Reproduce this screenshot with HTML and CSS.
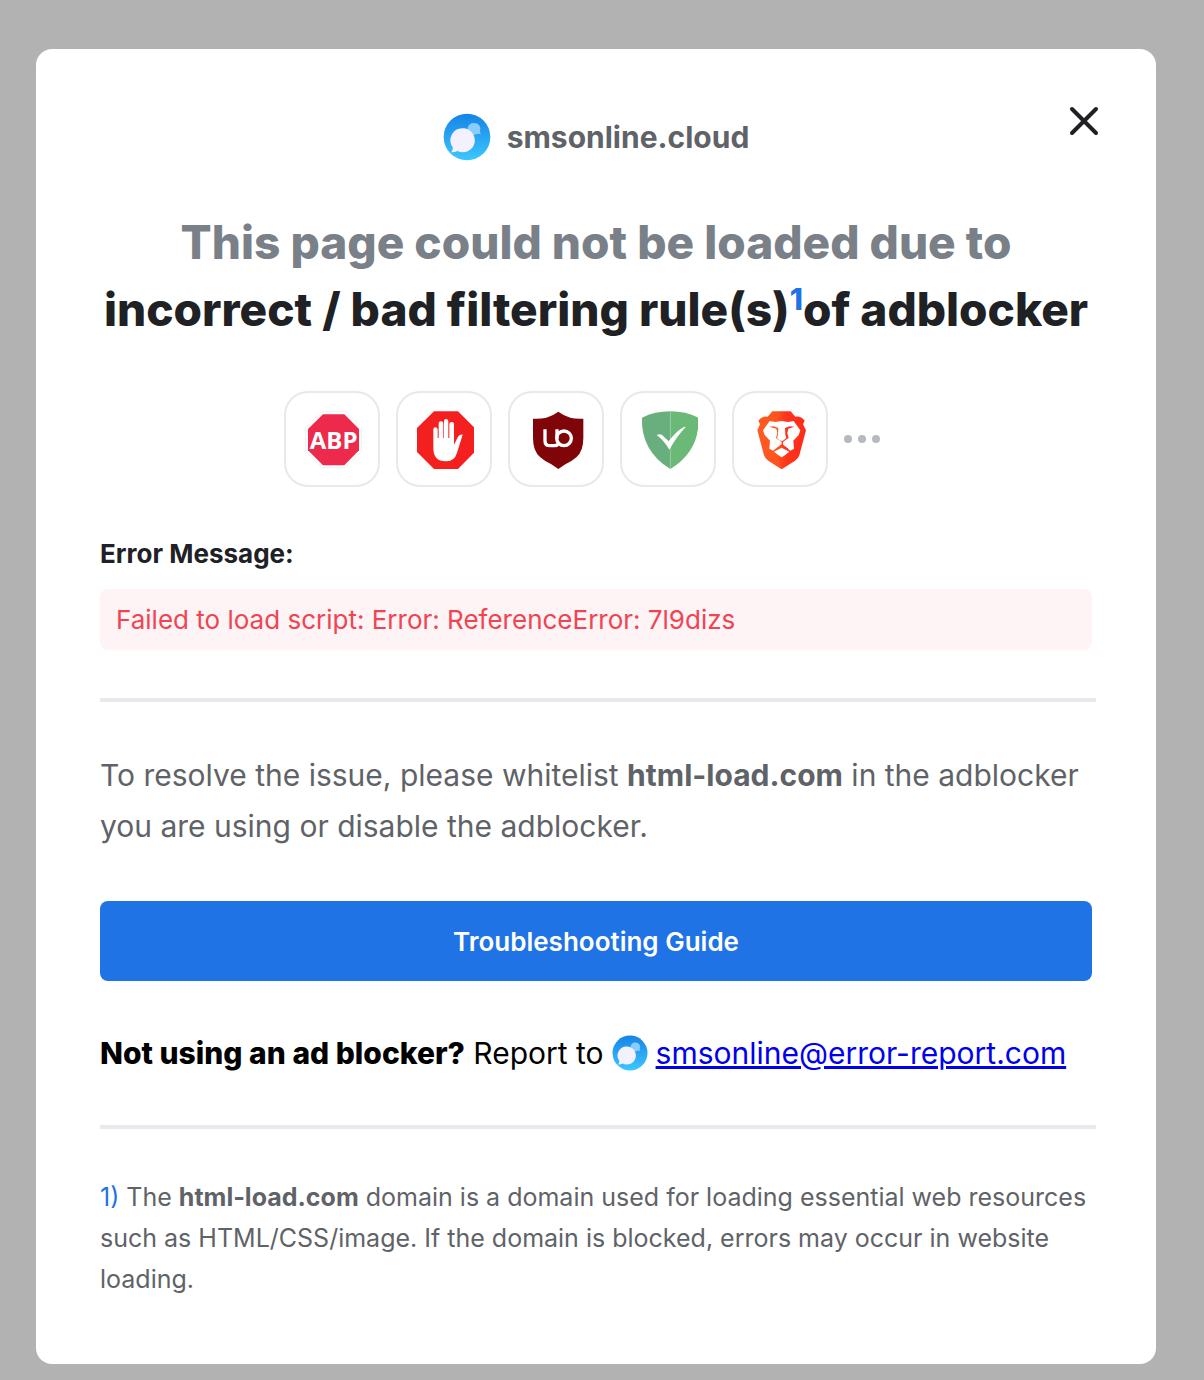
FILE: index.html
```
<!DOCTYPE html>
<html lang="en">
<head>
    <meta charset="UTF-8">
    <meta name="viewport" content="width=device-width, initial-scale=1.0">
    <title>smsonline.cloud</title>
    <link rel="stylesheet" href="styles.css">
</head>
<body>
    <svg width="0" height="0" class="defs" aria-hidden="true">
        <defs>
            <linearGradient id="sky" x1="0" y1="0" x2="0" y2="1">
                <stop offset="0" stop-color="#1583e6"/>
                <stop offset="1" stop-color="#3cc8ff"/>
            </linearGradient>
            <linearGradient id="flame" x1="0" y1="0" x2="1" y2="0">
                <stop offset="0" stop-color="#ff5a22"/>
                <stop offset="0.4" stop-color="#ff5420"/>
                <stop offset="0.6" stop-color="#ff341c"/>
                <stop offset="1" stop-color="#ff2a1a"/>
            </linearGradient>
        </defs>
        <symbol id="logo" viewBox="39 38 144 144">
            <circle cx="111" cy="110" r="70" fill="url(#sky)"/>
            <path d="M134 68a18 18 0 0 1 16 25l2 9-10-2a18 18 0 1 1-8-32z" fill="#8accfb"/>
            <path d="M99 84a36 36 0 1 1-17 68c-6 3-12 4-19 4 4-4 6-9 5-15A36 36 0 0 1 99 84z" fill="#f3f1fd"/>
        </symbol>
    </svg>

    <main class="modal">
        <button type="button" class="close" aria-label="Close">
            <svg viewBox="0 0 32 32" width="32" height="32"><path d="M4 4l24 24M28 4L4 28"/></svg>
        </button>

        <div class="brand">
            <svg class="brand-logo"><use href="#logo"/></svg>
            <span>smsonline.cloud</span>
        </div>

        <h1><span class="muted">This page could not be loaded due to</span><br>incorrect / bad filtering rule(s)<sup>1</sup>of adblocker</h1>

        <div class="blockers">
            <div class="tile">
                <svg viewBox="66 71 180 180">
                    <path d="M125 78h72l48 48v72l-48 49h-72l-48-49v-72z" fill="#fff" stroke="#e8e8ea" stroke-width="2"/>
                    <path d="M129 87h64l44 44v64l-44 45h-64l-45-45v-64z" fill="#ed2a4c"/>
                    <text x="161" y="190" class="abp">ABP</text>
                </svg>
            </div>
            <div class="tile">
                <svg viewBox="402 71 180 180">
                    <path d="M462 78h72l50 50v72l-50 51h-72l-51-51v-72z" fill="#f4201f"/>
                    <path d="M460 132q0-6 6-6t7 6v26h3v-44q0-6 7-6t7 6v44h2v-51q0-6 6-6t7 6v51h3v-42q0-6 7-6t7 6v62l12-24q5-7 14-6l-17 54q-7 26-34 26-37 0-37-40z" fill="#fff"/>
                </svg>
            </div>
            <div class="tile">
                <svg viewBox="78 71 180 180">
                    <path d="M175 79q16 12 36 18 14 4 39 3v58q0 39-20 57-16 14-34 22l-21 14-21-14q-18-8-34-22-21-18-21-57v-58q25 1 40-3 20-6 36-18z" fill="#7f0508"/>
                    <path d="M135 132v34q0 15 15 15h14q8 0 13-7M171 132v28" fill="none" stroke="#fff" stroke-width="10"/>
                    <circle cx="192" cy="159" r="22" fill="none" stroke="#fff" stroke-width="10"/>
                </svg>
            </div>
            <div class="tile">
                <svg viewBox="414 71 180 180">
                    <path d="M511 78q47 0 84 19 5 99-84 154z" fill="#6bb976"/>
                    <path d="M511 78q-47 0-85 19-4 99 85 154z" fill="#69af7e"/>
                    <path d="M511 78v173" stroke="#9bd0a5" stroke-width="2"/>
                    <path d="M470 149q10-5 17 1l19 18q23-32 47-44l4 1q-28 30-49 68-15-27-38-44z" fill="#fff"/>
                </svg>
            </div>
            <div class="tile">
                <svg viewBox="90 71 180 180">
                    <path d="M157 78h55l14 16q16-3 28 12l-5 11 9 18-20 75q-3 10-13 16l-40 26-40-26q-10-6-13-16l-20-75 8-18-5-11q11-15 28-12z" fill="url(#flame)"/>
                    <path d="M149 107l17 3 19-3 19 3 17-3 20 28-5 14-16 17 2 24-11 6-26-20-26 20-11-6 2-24-16-17-5-14z" fill="#fff"/>
                    <path d="M147 124l14-1 14 5-1 20-3 10 8 7 6 2 6-2 8-7-3-10-1-20 14-5 14 1-18 6-3 14 4 14-10 7-7 5v8l16 12-4 2-14-10-14 10-4-2 16-12v-8l-7-5-10-7 4-14-3-14z" fill="url(#flame)"/>
                    <path d="M185 187l23 12q-11 9-23 17-12-8-23-17z" fill="#fff"/>
                </svg>
            </div>
            <div class="more">
                <i></i><i></i><i></i>
            </div>
        </div>

        <h2>Error Message:</h2>
        <div class="error">Failed to load script: Error: ReferenceError: 7l9dizs</div>

        <hr>

        <p class="resolve">To resolve the issue, please whitelist <b>html-load.com</b> in the adblocker you are using or disable the adblocker.</p>

        <button type="button" class="guide">Troubleshooting Guide</button>

        <div class="report">
            <span><b>Not using an ad blocker?</b> Report to</span>
            <svg class="report-logo"><use href="#logo"/></svg>
            <a href="mailto:smsonline@error-report.com">smsonline@error-report.com</a>
        </div>

        <hr>

        <p class="footnote"><span class="mark">1)</span> The <b>html-load.com</b> domain is a domain used for loading essential web resources such as HTML/CSS/image. If the domain is blocked, errors may occur in website loading.</p>
    </main>
</body>
</html>
```

FILE: styles.css
```
body {
    margin: 0;
    padding: 49px 48px 15px 36px;
    background: #b2b2b2;
    font-family: Inter, "Liberation Sans", sans-serif;
    color: #202124;
}
.defs {
    position: absolute;
}
.modal {
    position: relative;
    padding: 64px;
    background: #fff;
    border-radius: 16px;
}
.close {
    position: absolute;
    top: 56px;
    right: 56px;
    padding: 0;
    border: none;
    background: none;
    cursor: pointer;
}
.close svg {
    display: block;
    fill: none;
    stroke: #202124;
    stroke-width: 4;
    stroke-linecap: round;
}
.brand {
    display: flex;
    justify-content: center;
    align-items: center;
    gap: 16px;
    height: 48px;
    font-size: 30px;
    font-weight: 700;
    color: #5f6368;
}
.brand-logo {
    width: 48px;
    height: 48px;
}
h1 {
    margin: 48px 0;
    font-size: 46px;
    line-height: 67px;
    font-weight: 800;
    text-align: center;
}
.muted {
    color: #7a8088;
}
sup {
    font-size: 30px;
    line-height: 0;
    color: #1f73e4;
}
.blockers {
    display: flex;
    justify-content: center;
    gap: 16px;
    margin-bottom: 48px;
}
.tile {
    box-sizing: border-box;
    width: 96px;
    height: 96px;
    padding: 16px;
    border: 2px solid #e8e8ed;
    border-radius: 24px;
}
.tile svg {
    display: block;
    width: 60px;
    height: 60px;
}
.abp {
    font-family: "Open Sans", sans-serif;
    font-size: 72px;
    font-weight: 700;
    text-anchor: middle;
    fill: #fff;
}
.more {
    display: flex;
    align-items: center;
    gap: 6px;
    width: 64px;
}
.more i {
    width: 8px;
    height: 8px;
    border-radius: 50%;
    background: #b4babf;
}
h2 {
    margin: 0 0 16px;
    font-size: 26px;
    line-height: 38px;
    font-weight: 700;
}
.error {
    padding: 8px 16px;
    border-radius: 8px;
    background: #fff4f5;
    font-size: 26px;
    line-height: 45px;
    color: #f04452;
}
hr {
    height: 0;
    margin: 48px -4px 48px 0;
    border: 2px solid #e8e8ed;
}
.resolve {
    margin: 0;
    font-size: 30px;
    line-height: 51px;
    color: #5f6368;
}
.guide {
    display: block;
    width: 100%;
    height: 80px;
    margin: 49px 0 48px;
    border: none;
    border-radius: 8px;
    background: #1f73e4;
    font-family: inherit;
    font-size: 26px;
    font-weight: 600;
    color: #fff;
    cursor: pointer;
}
.report {
    display: flex;
    align-items: center;
    height: 48px;
    font-size: 30px;
    white-space: nowrap;
    color: #000;
}
.report b {
    font-weight: 800;
}
.report-logo {
    flex: none;
    width: 36px;
    height: 36px;
    margin: 0 8px;
}
.report a {
    color: #0000ee;
    text-decoration-thickness: 3px;
}
.footnote {
    margin: 0;
    font-size: 25px;
    line-height: 41px;
    color: #5f6368;
}
.mark {
    color: #1f73e4;
}
```
